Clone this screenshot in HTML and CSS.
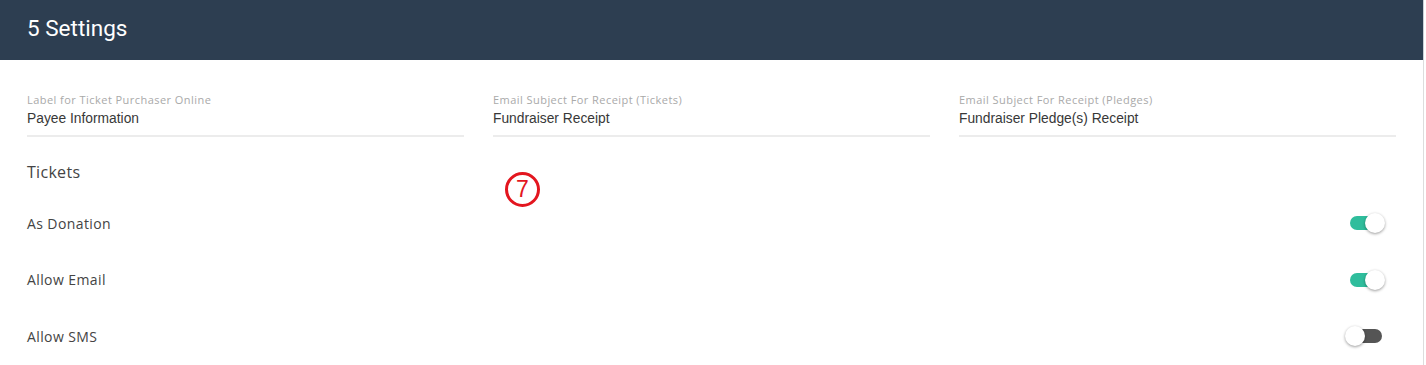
FILE: index.html
```html
<!DOCTYPE html>
<html lang="en">
<head>
    <meta charset="UTF-8">
    <title>5 Settings</title>
    <link rel="stylesheet" href="styles.css">
</head>
<body>

<div class="panel">
    <div class="panel-header">
        <h2>5 Settings</h2>
    </div>

    <div class="panel-body">
        <div class="fields">
            <div class="field">
                <label>Label for Ticket Purchaser Online</label>
                <div class="value">Payee Information</div>
            </div>
            <div class="field">
                <label>Email Subject For Receipt (Tickets)</label>
                <div class="value">Fundraiser Receipt</div>
            </div>
            <div class="field">
                <label>Email Subject For Receipt (Pledges)</label>
                <div class="value">Fundraiser Pledge(s) Receipt</div>
            </div>
        </div>

        <h3 class="section-title">Tickets</h3>

        <div class="row">
            <span>As Donation</span>
            <span class="switch on"><span class="knob"></span></span>
        </div>
        <div class="row">
            <span>Allow Email</span>
            <span class="switch on"><span class="knob"></span></span>
        </div>
        <div class="row">
            <span>Allow SMS</span>
            <span class="switch"><span class="knob"></span></span>
        </div>

        <div class="marker">7</div>
    </div>
</div>

</body>
</html>
```

FILE: styles.css
```css
body {
    margin: 0;
    background-color: #ffffff;
    font-family: "Liberation Sans", Arial, sans-serif;
}
.panel {
    width: 1424px;
    height: 365px;
    border-right: 1px solid #dddddd;
    box-sizing: border-box;
}
.panel-header {
    height: 60px;
    background-color: #2d3e51;
    display: flex;
    align-items: center;
    padding: 0 27px;
    border-right: 1px solid #c9cfd6;
    margin-right: -1px;
}
.panel-header h2 {
    margin: 0 0 4px 0;
    color: #ffffff;
    font-family: Roboto, sans-serif;
    font-weight: 400;
    font-size: 22.5px;
}
.panel-body {
    position: relative;
    padding: 31px 28px 0 27px;
}
.fields {
    display: grid;
    grid-template-columns: repeat(3, 437px);
    column-gap: 29px;
}
.field label {
    display: block;
    font-family: "Open Sans", sans-serif;
    font-size: 11px;
    letter-spacing: 0.45px;
    color: #a9a9a9;
    line-height: 18px;
}
.field .value {
    font-size: 13.8px;
    color: #383838;
    line-height: 20px;
    padding-bottom: 6px;
    border-bottom: 2px solid #ececec;
}
.section-title {
    margin: 24px 0 0 0;
    font-family: "Open Sans", sans-serif;
    font-weight: 400;
    font-size: 16px;
    letter-spacing: 0.3px;
    color: #444444;
    line-height: 22px;
}
.row {
    display: flex;
    justify-content: space-between;
    align-items: center;
    height: 56.5px;
    padding-right: 13px;
    font-family: "Open Sans", sans-serif;
    font-size: 14px;
    letter-spacing: 0.4px;
    color: #444444;
}
.row:nth-of-type(2) {
    margin-top: 12px;
}
.switch {
    position: relative;
    width: 32px;
    height: 14px;
    border-radius: 7px;
    background-color: #555555;
}
.switch.on {
    background-color: #2fbd9c;
}
.switch .knob {
    position: absolute;
    top: -3px;
    left: -5px;
    width: 20px;
    height: 20px;
    border-radius: 50%;
    background-color: #ffffff;
    box-shadow: 0 1px 3px rgba(0, 0, 0, 0.4);
}
.switch.on .knob {
    left: 15px;
}
.marker {
    position: absolute;
    left: 505px;
    top: 112px;
    width: 29px;
    height: 29px;
    border: 3px solid #e3161f;
    border-radius: 50%;
    color: #e3161f;
    font-family: "Liberation Sans", Arial, sans-serif;
    font-size: 23px;
    line-height: 29px;
    text-align: center;
}
```
